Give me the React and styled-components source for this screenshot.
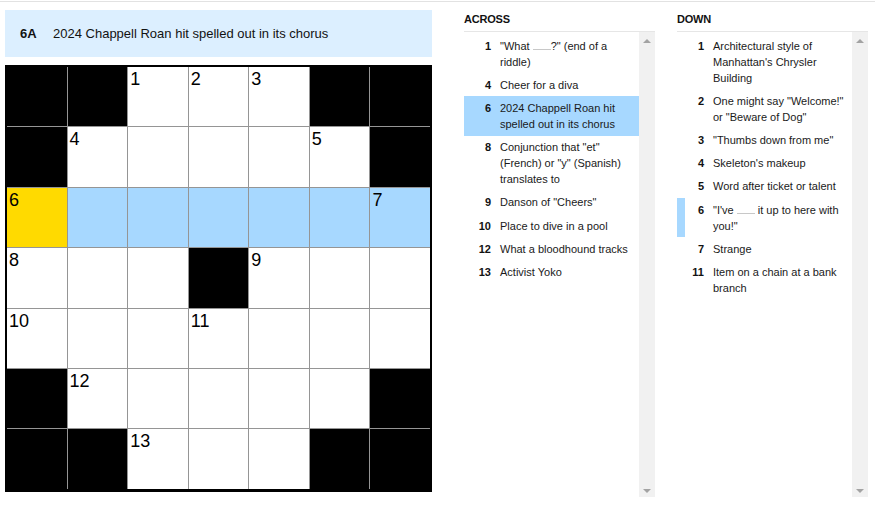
import React from 'react'
import styled, { createGlobalStyle } from 'styled-components'

const GlobalStyle = createGlobalStyle`
  html, body {
    margin: 0;
    padding: 0;
    background: #fff;
  }
  body {
    font-family: "Liberation Sans", Arial, sans-serif;
    color: #121212;
  }
`

const Blank = styled.span`
  display: inline-block;
  width: 18px;
  vertical-align: baseline;
  border-bottom: 1px solid #c8c8c8;
`

// 7x7 board: '#' = block, otherwise clue number (or '') for the cell
const BOARD = [
  ['#', '#', '1', '2', '3', '#', '#'],
  ['#', '4', '', '', '', '5', '#'],
  ['6', '', '', '', '', '', '7'],
  ['8', '', '', '#', '9', '', ''],
  ['10', '', '', '11', '', '', ''],
  ['#', '12', '', '', '', '', '#'],
  ['#', '#', '13', '', '', '#', '#'],
]

const ACROSS = [
  { n: 1, text: <>"What <Blank />?" (end of a riddle)</> },
  { n: 4, text: 'Cheer for a diva' },
  { n: 6, text: '2024 Chappell Roan hit spelled out in its chorus', active: true },
  { n: 8, text: 'Conjunction that "et" (French) or "y" (Spanish) translates to' },
  { n: 9, text: 'Danson of "Cheers"' },
  { n: 10, text: 'Place to dive in a pool' },
  { n: 12, text: 'What a bloodhound tracks' },
  { n: 13, text: 'Activist Yoko' },
]

const DOWN = [
  { n: 1, text: "Architectural style of Manhattan's Chrysler Building" },
  { n: 2, text: 'One might say "Welcome!" or "Beware of Dog"' },
  { n: 3, text: '"Thumbs down from me"' },
  { n: 4, text: "Skeleton's makeup" },
  { n: 5, text: 'Word after ticket or talent' },
  { n: 6, text: <>"I've <Blank /> it up to here with you!"</>, crossing: true },
  { n: 7, text: 'Strange' },
  { n: 11, text: 'Item on a chain at a bank branch' },
]

function cellTone(r, c) {
  if (BOARD[r][c] === '#') return 'block'
  if (r === 2 && c === 0) return 'selected'
  if (r === 2) return 'word'
  return 'open'
}

function ClueColumn({ title, clues }) {
  return (
    <Column>
      <ColumnTitle>{title}</ColumnTitle>
      <ListFrame>
        <List>
          {clues.map((c) => (
            <ClueItem key={c.n} $active={c.active} $crossing={c.crossing}>
              <ClueNum>{c.n}</ClueNum>
              <ClueText>{c.text}</ClueText>
            </ClueItem>
          ))}
        </List>
        <Scrollbar>
          <Arrow $dir="up" />
          <Arrow $dir="down" />
        </Scrollbar>
      </ListFrame>
    </Column>
  )
}

export default function App() {
  return (
    <Page>
      <GlobalStyle />
      <BoardSide>
        <ClueBar>
          <ClueBarNum>6A</ClueBarNum>
          <span>2024 Chappell Roan hit spelled out in its chorus</span>
        </ClueBar>
        <Board>
          {BOARD.map((row, r) =>
            row.map((v, c) => (
              <Cell key={`${r}-${c}`} $tone={cellTone(r, c)}>
                {v !== '#' && v && <CellNum>{v}</CellNum>}
              </Cell>
            ))
          )}
        </Board>
      </BoardSide>
      <ClueColumn title="Across" clues={ACROSS} />
      <ClueColumn title="Down" clues={DOWN} />
    </Page>
  )
}

const Page = styled.div`
  display: flex;
  align-items: flex-start;
  margin-top: 1px;
  border-top: 1px solid #e2e2e2;
  height: 505px;
  box-sizing: border-box;
`

const BoardSide = styled.div`
  width: 427px;
  margin-left: 5px;
  padding-top: 8px;
`

const ClueBar = styled.div`
  height: 47px;
  background: #dcefff;
  display: flex;
  align-items: center;
  padding-left: 15px;
  font-size: 13px;
  color: #121212;
  margin-bottom: 8px;
`

const ClueBarNum = styled.b`
  width: 33px;
  font-weight: 700;
`

const Board = styled.div`
  display: grid;
  grid-template-columns: repeat(7, 1fr);
  grid-auto-rows: 59.4px;
  gap: 1px;
  background: #959595;
  border: 2px solid #000;
  border-bottom-width: 3px;
`

const toneColors = {
  block: '#000',
  selected: '#ffda00',
  word: '#a7d8ff',
  open: '#fff',
}

const Cell = styled.div`
  position: relative;
  background: ${(p) => toneColors[p.$tone]};
`

const CellNum = styled.span`
  position: absolute;
  top: 3px;
  left: 2px;
  font-family: "Liberation Sans", Arial, sans-serif;
  font-size: 18px;
  line-height: 18px;
  color: #000;
`

const Column = styled.div`
  width: 191px;
  margin-left: 32px;
  & + & {
    margin-left: 22px;
  }
`

const ColumnTitle = styled.div`
  height: 29px;
  line-height: 34px;
  font-size: 11px;
  font-weight: 700;
  text-transform: uppercase;
  letter-spacing: -0.2px;
  border-bottom: 1px solid #e6e6e6;
`

const ListFrame = styled.div`
  display: flex;
  height: 465px;
`

const List = styled.ol`
  flex: 1;
  list-style: none;
  margin: 0;
  padding: 2px 0 0;
  overflow: hidden;
`

const ClueItem = styled.li`
  display: flex;
  padding: 3.6px 0;
  background: ${(p) => (p.$active ? '#a7d8ff' : 'transparent')};
  border-left: 8px solid ${(p) => (p.$crossing ? '#a7d8ff' : 'transparent')};
  font-size: 11px;
  line-height: 16px;
`

const ClueNum = styled.span`
  width: 19px;
  text-align: right;
  font-weight: 700;
  flex-shrink: 0;
`

const ClueText = styled.span`
  margin-left: 9px;
  padding-right: 8px;
  color: #1a1a1a;
`

const Scrollbar = styled.div`
  width: 16px;
  background: #f1f1f1;
  display: flex;
  flex-direction: column;
  justify-content: space-between;
  align-items: center;
  padding: 7px 0 4px;
`

const Arrow = styled.div`
  width: 0;
  height: 0;
  border-left: 4px solid transparent;
  border-right: 4px solid transparent;
  ${(p) =>
    p.$dir === 'up'
      ? 'border-bottom: 4px solid #a3a3a3;'
      : 'border-top: 4px solid #a3a3a3;'}
`
